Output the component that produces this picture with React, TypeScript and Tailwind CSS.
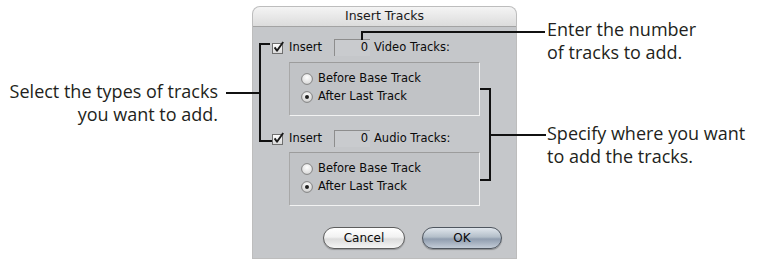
import React from "react";

function CheckBox() {
  return (
    <svg width="12" height="13" viewBox="0 0 12 13" className="shrink-0 -mt-[1px]">
      <defs>
        <linearGradient id="cbg" x1="0" y1="0" x2="0" y2="1">
          <stop offset="0" stopColor="#ffffff" />
          <stop offset="1" stopColor="#d8d8d8" />
        </linearGradient>
      </defs>
      <rect x="0.5" y="2.5" width="10" height="10" fill="url(#cbg)" stroke="#6f6f6f" />
      <path d="M2.6 6.4 L5 9.8 L11.2 1" fill="none" stroke="#1a1a1a" strokeWidth="1.9" strokeLinejoin="round" />
    </svg>
  );
}

function Radio({ on }: { on?: boolean }) {
  return (
    <svg width="12" height="12" viewBox="0 0 12 12" className="shrink-0">
      <defs>
        <radialGradient id={on ? "rg1" : "rg0"} cx="0.5" cy="0.35" r="0.7">
          <stop offset="0" stopColor="#ffffff" />
          <stop offset="1" stopColor={on ? "#c9c9c9" : "#d4d4d4"} />
        </radialGradient>
      </defs>
      <circle cx="6" cy="6" r="5.4" fill={`url(#${on ? "rg1" : "rg0"})`} stroke="#7a7a7a" strokeWidth="0.9" />
      {on && <circle cx="6" cy="6" r="2" fill="#1e1e1e" />}
    </svg>
  );
}

function InsertRow({ label, className = "" }: { label: string; className?: string }) {
  return (
    <div className={`flex items-center h-[17px] ${className}`}>
      <CheckBox />
      <span className="ml-[5px] w-[45px]">Insert</span>
      <div className="w-[36px] h-[17px] bg-[#c9cbce] border-t border-l border-[#8d8d8d] border-b-[#eeeeee] border-r-[#e4e4e4] flex items-center justify-end pr-[2px]">
        0
      </div>
      <span className="ml-[4px]">{label}</span>
    </div>
  );
}

function Group({ className = "" }: { className?: string }) {
  return (
    <div
      className={`ml-[17px] w-[191px] h-[54px] bg-[#c1c3c6] border border-[#f2f2f2] border-t-[#9c9c9c] border-l-[#a8a8a8] pl-[11px] pt-[7px] flex flex-col ${className}`}
    >
      <div className="flex items-center h-[18px] gap-[5px]">
        <Radio />
        <span>Before Base Track</span>
      </div>
      <div className="flex items-center h-[18px] gap-[5px]">
        <Radio on />
        <span>After Last Track</span>
      </div>
    </div>
  );
}

function Dialog() {
  return (
    <div className="mt-[7px] w-[263px] h-[251px] shrink-0 flex flex-col rounded-t-[7px] overflow-hidden bg-[#c5c7ca] shadow-[0_0_0_1px_#bdbdbd] font-['DejaVu_Sans',sans-serif] text-[11.5px] text-[#0a0a0a]">
      <div className="h-[20px] shrink-0 bg-[linear-gradient(to_bottom,#f4f4f4,#dcdcdc)] border-b border-[#a3a3a3] flex items-center justify-center text-[12.5px] text-[#1a1a1a]">
        Insert Tracks
      </div>
      <div className="flex-1 flex flex-col pl-[19px] pt-[12px]">
        <InsertRow label="Video Tracks:" />
        <Group className="mt-[6px]" />
        <InsertRow label="Audio Tracks:" className="mt-[14px]" />
        <Group className="mt-[5px]" />
        <div className="mt-auto mb-[9px] flex justify-end gap-[17px] pr-[14px] text-[12px]">
          <div className="w-[82px] h-[22px] rounded-full border border-[#5d5d5d] bg-[linear-gradient(to_bottom,#ffffff_0%,#f2f2f2_45%,#dcdcdc_55%,#f5f5f5_100%)] flex items-center justify-center shadow-[0_1px_1px_rgba(0,0,0,0.25)]">
            Cancel
          </div>
          <div className="w-[80px] h-[22px] rounded-full border border-[#4f565f] bg-[linear-gradient(to_bottom,#e0e6ec_0%,#b3bec9_45%,#909daf_55%,#c3ccd7_100%)] flex items-center justify-center shadow-[0_1px_1px_rgba(0,0,0,0.3)]">
            OK
          </div>
        </div>
      </div>
    </div>
  );
}

export default function App() {
  return (
    <div className="relative w-[757px] h-[262px] bg-white flex overflow-hidden text-[#231f20] font-['Open_Sans',sans-serif]">
      <div className="w-[253px] shrink-0 pr-[35px] pt-[80px] text-right text-[18px] leading-[23px] whitespace-nowrap">
        <p>Select the types of tracks</p>
        <p>you want to add.</p>
      </div>
      <Dialog />
      <div className="flex-1 pl-[31px] flex flex-col text-[18px] leading-[23px] whitespace-nowrap">
        <div className="pt-[18px]">
          <p>Enter the number</p>
          <p>of tracks to add.</p>
        </div>
        <div className="mt-[58px]">
          <p>Specify where you want</p>
          <p>to add the tracks.</p>
        </div>
      </div>
      <svg className="absolute inset-0 pointer-events-none" width="757" height="262" viewBox="0 0 757 262">
        <g fill="none" stroke="#111" strokeWidth="2">
          <path d="M362 40 V32 H545" />
          <path d="M226 93 H260" />
          <path d="M270 44 H260 V141 H272" />
          <path d="M480 89 H490 V180 H480" />
          <path d="M490 135 H546" />
        </g>
      </svg>
    </div>
  );
}
